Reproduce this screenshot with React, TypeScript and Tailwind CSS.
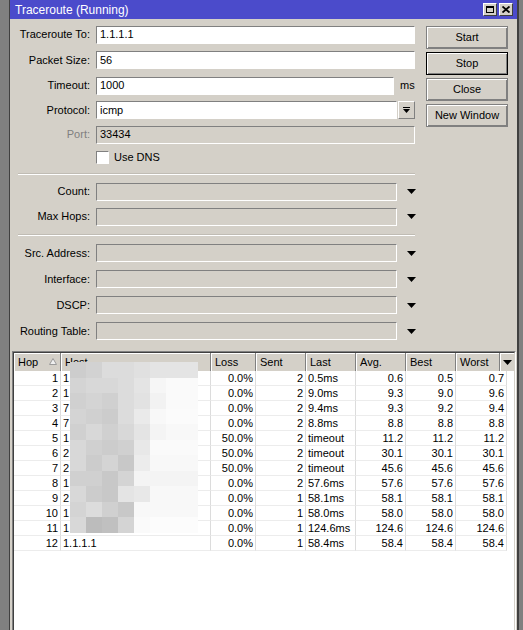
import React from 'react';

const sunken =
  'border border-t-[#808080] border-l-[#808080] border-b-white border-r-white';

const rows = [
  ['1', '1', '0.0%', '2', '0.5ms', '0.6', '0.5', '0.7'],
  ['2', '1', '0.0%', '2', '9.0ms', '9.3', '9.0', '9.6'],
  ['3', '7', '0.0%', '2', '9.4ms', '9.3', '9.2', '9.4'],
  ['4', '7', '0.0%', '2', '8.8ms', '8.8', '8.8', '8.8'],
  ['5', '1', '50.0%', '2', 'timeout', '11.2', '11.2', '11.2'],
  ['6', '2', '50.0%', '2', 'timeout', '30.1', '30.1', '30.1'],
  ['7', '2', '50.0%', '2', 'timeout', '45.6', '45.6', '45.6'],
  ['8', '1', '0.0%', '2', '57.6ms', '57.6', '57.6', '57.6'],
  ['9', '2', '0.0%', '1', '58.1ms', '58.1', '58.1', '58.1'],
  ['10', '1', '0.0%', '1', '58.0ms', '58.0', '58.0', '58.0'],
  ['11', '1', '0.0%', '1', '124.6ms', '124.6', '124.6', '124.6'],
  ['12', '1.1.1.1', '0.0%', '1', '58.4ms', '58.4', '58.4', '58.4'],
];

// pixelated host column (redacted in the original)
const blur = [
  ['#cdcdcd', '#d2d2d2', '#dcdcdc', '#dcdcdc', '#e0e0e0', '#e4e4e4', '#e4e4e4', '#e4e4e4'],
  ['#d4d4d4', '#d8d8d8', '#d8d8d8', '#dcdcdc', '#e4e4e4', '#f6f6f6', '#fafafa', '#fafafa'],
  ['#d0d0d0', '#d4d4d4', '#d0d0d0', '#dcdcdc', '#e2e2e2', '#f2f2f2', '#fafafa', '#fafafa'],
  ['#d4d4d4', '#d0d0d0', '#cccccc', '#dcdcdc', '#eaeaea', '#f8f8f8', '#fbfbfb', '#fbfbfb'],
  ['#d0d0d0', '#d8d8d8', '#d0d0d0', '#d8d8d8', '#e4e4e4', '#f4f4f4', '#f8f8f8', '#f8f8f8'],
  ['#d8d8d8', '#d0d0d0', '#cccccc', '#d0d0d0', '#e8e8e8', '#fafafa', '#fafafa', '#fafafa'],
  ['#d8d8d8', '#cccccc', '#d4d4d4', '#c8c8c8', '#ececec', '#f8f8f8', '#f8f8f8', '#f8f8f8'],
  ['#d0d0d0', '#d0d0d0', '#c8c8c8', '#d4d4d4', '#f4f4f4', '#f4f4f4', '#f4f4f4', '#f4f4f4'],
  ['#d8d8d8', '#cccccc', '#c8c8c8', '#e4e4e4', '#e8e8e8', '#f8f8f8', '#f8f8f8', '#f8f8f8'],
  ['#d4d4d4', '#dcdcdc', '#d0d0d0', '#c8c8c8', '#f8f8f8', '#f8f8f8', '#f8f8f8', '#f8f8f8'],
  ['#d8d8d8', '#bcbcbc', '#c0c0c0', '#d4d4d4', '#fafafa', '#fcfcfc', '#fcfcfc', '#fcfcfc'],
];

const widths = ['w-[47px]', 'w-[150px]', 'w-[45px]', 'w-[50px]', 'w-[50px]', 'w-[50px]', 'w-[50px]', 'w-[51px]'];
const rightAlign = [true, false, true, true, false, true, true, true];

function DownArrow() {
  return (
    <svg width="9" height="5" viewBox="0 0 9 5">
      <polygon points="0,0 9,0 4.5,5" fill="#000" />
    </svg>
  );
}

function Label({ text, disabled }: { text: string; disabled?: boolean }) {
  return (
    <div className={`w-[80px] text-right ${disabled ? 'text-[#808080]' : 'text-black'}`}>{text}</div>
  );
}

function TextRow({ label, value, h = 'h-[25px]' }: { label: string; value: string; h?: string }) {
  return (
    <div className={`flex items-center gap-[6px] ${h}`}>
      <Label text={label} />
      <div className={`w-[319px] h-[18px] bg-white ${sunken} flex items-center px-[3px]`}>{value}</div>
    </div>
  );
}

function DropRow({ label, h = 'h-[25px]' }: { label: string; h?: string }) {
  return (
    <div className={`flex items-center gap-[6px] ${h}`}>
      <Label text={label} />
      <div className={`w-[301px] h-[18px] bg-[#d4d0c8] ${sunken}`} />
      <div className="w-[17px] flex justify-center">
        <DownArrow />
      </div>
    </div>
  );
}

function Separator() {
  return <div className="ml-[8px] w-[397px] h-[2px] border-t border-t-[#c0bcb4] border-b border-b-white" />;
}

function WinButton({ label, def }: { label: string; def?: boolean }) {
  return (
    <div
      className={`w-[82px] h-[23px] flex items-center justify-center bg-[#d4d0c8] border ${
        def ? 'border-black' : 'border-[#808080]'
      } shadow-[inset_1px_1px_0_#ffffff,inset_-1px_-1px_0_#808080]`}
    >
      {label}
    </div>
  );
}

function Header({ text, w, extra }: { text: string; w: string; extra?: React.ReactNode }) {
  return (
    <div
      className={`${w} h-[18px] shrink-0 flex items-center pl-[4px] bg-[#d4d0c8] border-r border-r-[#808080] shadow-[inset_1px_1px_0_#ffffff] relative`}
    >
      {text}
      {extra}
    </div>
  );
}

export default function App() {
  return (
    <div className="w-[523px] h-[630px] bg-[#808080] overflow-hidden font-['Liberation_Sans','DejaVu_Sans',sans-serif] text-[11px] text-black">
      <div className="ml-[9px] w-[510px] h-[640px] bg-[#d4d0c8] border-l border-l-[#404040] border-r-2 border-r-[#404040] flex flex-col">
        {/* title bar */}
        <div className="h-[19px] bg-[#4b4bcb] flex items-center justify-between pl-[5px] pr-[4px] shrink-0">
          <span className="text-white text-[12px] leading-none">Traceroute (Running)</span>
          <div className="flex gap-[2px] mb-[1px]">
            <div className="w-[14px] h-[13px] bg-[#d4d0c8] border border-t-white border-l-white border-b-[#404040] border-r-[#404040] flex items-center justify-center">
              <div className="w-[8px] h-[7px] border border-black border-t-2" />
            </div>
            <div className="w-[14px] h-[13px] bg-[#d4d0c8] border border-t-white border-l-white border-b-[#404040] border-r-[#404040] flex items-center justify-center">
              <svg width="8" height="7" viewBox="0 0 8 7">
                <path d="M0.5 0.5 L7.5 6.5 M7.5 0.5 L0.5 6.5" stroke="#000" strokeWidth="1.8" />
              </svg>
            </div>
          </div>
        </div>

        {/* form + buttons */}
        <div className="flex shrink-0">
          <div className="w-[416px] pt-[3px]">
            <TextRow label="Traceroute To:" value="1.1.1.1" />
            <TextRow label="Packet Size:" value="56" h="h-[26px]" />
            <div className="flex items-center gap-[6px] h-[25px]">
              <Label text="Timeout:" />
              <div className={`w-[298px] h-[18px] bg-white ${sunken} flex items-center px-[3px]`}>1000</div>
              <span>ms</span>
            </div>
            <div className="flex items-center gap-[6px] h-[24px]">
              <Label text="Protocol:" />
              <div className={`w-[301px] h-[18px] bg-white ${sunken} flex items-center px-[3px]`}>icmp</div>
              <div className="w-[17px] h-[18px] -ml-[5px] bg-[#d4d0c8] border border-t-white border-l-white border-b-[#808080] border-r-[#808080] flex flex-col items-center justify-center gap-[1px]">
                <div className="w-[7px] h-[1px] bg-black" />
                <svg width="7" height="4" viewBox="0 0 7 4">
                  <polygon points="0,0 7,0 3.5,4" fill="#000" />
                </svg>
              </div>
            </div>
            <div className="flex items-center gap-[6px] h-[25px]">
              <Label text="Port:" disabled />
              <div className={`w-[319px] h-[18px] bg-[#d4d0c8] ${sunken} flex items-center px-[3px]`}>33434</div>
            </div>
            <div className="flex items-center h-[21px] pl-[86px] gap-[5px]">
              <div className={`w-[13px] h-[13px] bg-white ${sunken}`} />
              <span>Use DNS</span>
            </div>
            <div className="h-[5px]" />
            <Separator />
            <div className="h-[4px]" />
            <DropRow label="Count:" />
            <DropRow label="Max Hops:" />
            <div className="h-[5px]" />
            <Separator />
            <div className="h-[4px]" />
            <DropRow label="Src. Address:" h="h-[26px]" />
            <DropRow label="Interface:" h="h-[26px]" />
            <DropRow label="DSCP:" h="h-[26px]" />
            <DropRow label="Routing Table:" h="h-[26px]" />
          </div>
          <div className="pt-[7px] flex flex-col gap-[3px]">
            <WinButton label="Start" />
            <WinButton label="Stop" def />
            <WinButton label="Close" />
            <WinButton label="New Window" />
          </div>
        </div>

        {/* results table */}
        <div className="mt-[7px] ml-[2px] w-[504px] flex-1 border border-t-[#808080] border-l-[#808080] border-b-white border-r-white">
          <div className="h-full bg-white border border-t-[#404040] border-l-[#404040] border-b-[#d4d0c8] border-r-[#d4d0c8] relative overflow-hidden">
            <div className="flex">
              <Header
                text="Hop"
                w="w-[47px]"
                extra={
                  <svg className="absolute left-[35px] top-[5px]" width="8" height="7" viewBox="0 0 8 7">
                    <polygon points="4,0.5 7.5,6.5 0.5,6.5" fill="#f0f0f0" stroke="#9a9a9a" strokeWidth="1" />
                  </svg>
                }
              />
              <Header text="Host" w="w-[150px]" />
              <Header text="Loss" w="w-[45px]" />
              <Header text="Sent" w="w-[50px]" />
              <Header text="Last" w="w-[50px]" />
              <Header text="Avg." w="w-[50px]" />
              <Header text="Best" w="w-[50px]" />
              <Header text="Worst" w="w-[44px]" />
              <div className="flex-1 h-[18px] bg-[#d4d0c8] shadow-[inset_1px_1px_0_#ffffff] flex items-center justify-center">
                <DownArrow />
              </div>
            </div>
            {rows.map((r, i) => (
              <div key={i} className="flex h-[15px]">
                {r.map((c, j) => (
                  <div
                    key={j}
                    className={`${widths[j]} shrink-0 h-[15px] leading-[15px] border-r border-r-[#dcdcdc] border-b border-b-[#ececec] ${
                      rightAlign[j] ? 'text-right pr-[2px]' : 'pl-[2px]'
                    } overflow-hidden whitespace-nowrap`}
                  >
                    {c}
                  </div>
                ))}
              </div>
            ))}
            {/* redacted host blocks */}
            <div className="absolute left-[56px] top-[9px] flex flex-col">
              {blur.map((line, i) => (
                <div key={i} className="flex h-[15.5px]">
                  {line.map((c, j) => (
                    <div key={j} className="w-[16px] h-[15.5px]" style={{ backgroundColor: c }} />
                  ))}
                </div>
              ))}
            </div>
          </div>
        </div>
      </div>
    </div>
  );
}
